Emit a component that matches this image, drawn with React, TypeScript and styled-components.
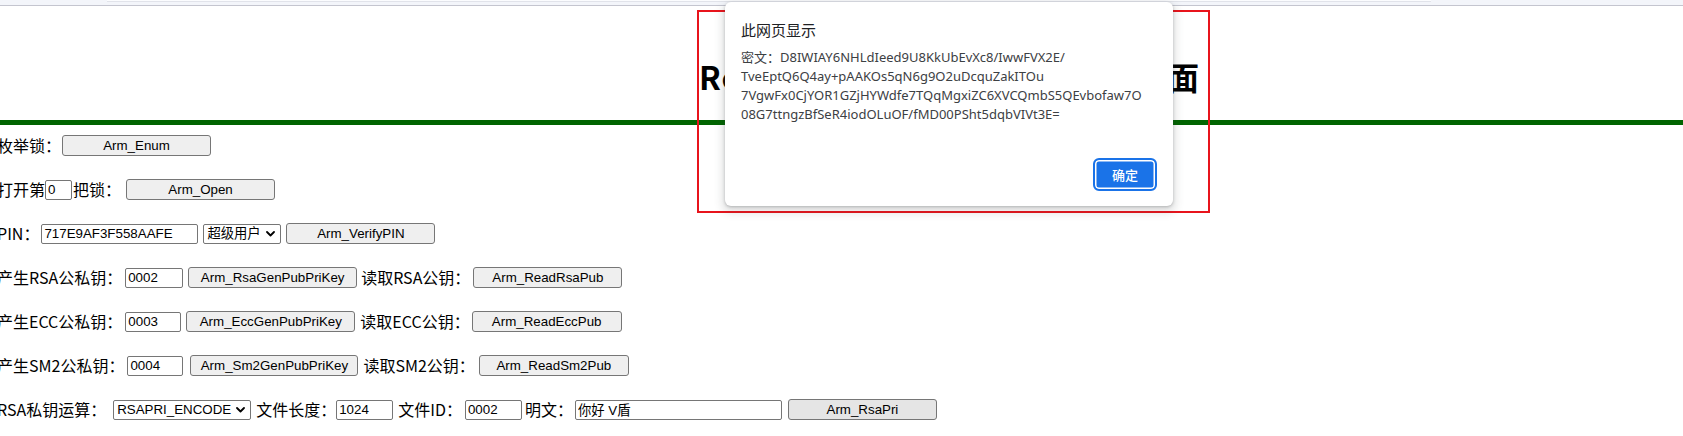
import React from "react";
import styled, { createGlobalStyle } from "styled-components";

const GlobalStyle = createGlobalStyle`
  html, body {
    margin: 0;
    padding: 0;
    background: #ffffff;
  }
  body {
    font-family: "Noto Sans CJK SC", "Noto Sans", sans-serif;
    color: #000;
    overflow: hidden;
  }
`;

const Page = styled.div`
  position: relative;
  width: 1683px;
  height: 436px;
  overflow: hidden;
  background: #fff;
`;

const BrowserStrip = styled.div`
  height: 5px;
  background: #f3f5fa;
  border-bottom: 1px solid #c4c5cf;
  padding-left: 107px;
`;

const StripEdge = styled.div`
  width: 1324px;
  height: 1px;
  background: #fbfcfe;
  border-bottom: 1px solid #e1e3ea;
`;

const Header = styled.header`
  height: 114px;
  box-sizing: border-box;
  padding: 54px 0 0 699px;
`;

const Title = styled.h1`
  margin: 0;
  font-family: "Noto Sans CJK SC", sans-serif;
  font-size: 32px;
  font-weight: 700;
  line-height: 32px;
  letter-spacing: 1px;
  white-space: nowrap;
`;

const Rule = styled.div`
  height: 5px;
  background: #006400;
`;

const Rows = styled.div`
  display: flex;
  flex-direction: column;
  gap: 23px;
  padding-top: 10px;
  margin-left: -3px;
`;

const Row = styled.div`
  display: flex;
  align-items: center;
  height: 21px;
  white-space: nowrap;
`;

const Label = styled.span<{ $ml?: number }>`
  font-family: "Noto Sans CJK SC", sans-serif;
  font-size: 16px;
  line-height: 21px;
  margin-left: ${(p) => p.$ml ?? 0}px;
`;

const Btn = styled.button<{ $w: number; $ml?: number; $hover?: boolean }>`
  box-sizing: border-box;
  width: ${(p) => p.$w}px;
  height: 21px;
  margin: 0 0 0 ${(p) => p.$ml ?? 0}px;
  padding: 0 6px;
  border: 1px solid #767676;
  border-radius: 3px;
  background: ${(p) => (p.$hover ? "#e5e5e5" : "#efefef")};
  font-family: "Liberation Sans", Arial, sans-serif;
  font-size: 13.33px;
  color: #000;
  line-height: 17px;
`;

const Field = styled.input<{ $w: number; $ml?: number }>`
  box-sizing: border-box;
  width: ${(p) => p.$w}px;
  height: 20px;
  margin: 0 0 0 ${(p) => p.$ml ?? 0}px;
  padding: 1px 2px;
  border: 1px solid #767676;
  border-radius: 2px;
  background: #fff;
  font-family: "Liberation Sans", Arial, "Noto Sans CJK SC", sans-serif;
  font-size: 13.33px;
  color: #000;
  outline: none;
`;

const SelectWrap = styled.span<{ $w: number; $ml?: number }>`
  position: relative;
  display: inline-flex;
  width: ${(p) => p.$w}px;
  height: 20px;
  margin-left: ${(p) => p.$ml ?? 0}px;
`;

const NativeSelect = styled.select`
  appearance: none;
  -webkit-appearance: none;
  box-sizing: border-box;
  width: 100%;
  height: 100%;
  margin: 0;
  padding: 0 16px 0 3px;
  border: 1px solid #767676;
  border-radius: 2px;
  background: #fff;
  font-family: "Liberation Sans", Arial, "Noto Sans CJK SC", sans-serif;
  font-size: 13.33px;
  color: #000;
`;

const Chevron = styled.svg`
  position: absolute;
  right: 6px;
  top: 7px;
  pointer-events: none;
`;

const Select = ({ w, ml, value, options }: { w: number; ml?: number; value: string; options: string[] }) => (
  <SelectWrap $w={w} $ml={ml}>
    <NativeSelect defaultValue={value}>
      {options.map((o) => (
        <option key={o}>{o}</option>
      ))}
    </NativeSelect>
    <Chevron width="9" height="6" viewBox="0 0 9 6">
      <path d="M1 1 L4.5 4.5 L8 1" fill="none" stroke="#000" strokeWidth="1.8" strokeLinecap="round" strokeLinejoin="round" />
    </Chevron>
  </SelectWrap>
);

const Marker = styled.div`
  position: absolute;
  left: 697px;
  top: 10px;
  width: 513px;
  height: 203px;
  box-sizing: border-box;
  border: 2px solid #e8141c;
`;

const Dialog = styled.div`
  position: absolute;
  left: 725px;
  top: 2px;
  width: 448px;
  height: 204px;
  box-sizing: border-box;
  padding: 18px 16px 15px 16px;
  background: #fff;
  border-radius: 6px;
  box-shadow: 0 1px 3px rgba(60, 64, 67, 0.3), 0 4px 8px 3px rgba(60, 64, 67, 0.15);
  display: flex;
  flex-direction: column;
`;

const DialogTitle = styled.div`
  font-family: "Noto Sans CJK SC", sans-serif;
  font-size: 15px;
  line-height: 20px;
  color: #202124;
`;

const Message = styled.div`
  margin-top: 8px;
  font-family: "Noto Sans", "Noto Sans CJK SC", sans-serif;
  font-size: 13px;
  line-height: 19px;
  color: #3c4043;
`;

const MsgLine = styled.div`
  white-space: nowrap;
`;

const Footer = styled.div`
  margin-top: auto;
  display: flex;
  justify-content: flex-end;
`;

const OkButton = styled.button`
  box-sizing: border-box;
  width: 64px;
  height: 33px;
  margin: 0;
  padding: 0;
  border: 2px solid #1a73e8;
  border-radius: 6px;
  background: #1a73e8;
  box-shadow: inset 0 0 0 1.5px #ffffff;
  color: #fff;
  font-family: "Noto Sans CJK SC", sans-serif;
  font-size: 13px;
  font-weight: 500;
`;

const messageLines = [
  "密文：D8IWIAY6NHLdIeed9U8KkUbEvXc8/IwwFVX2E/",
  "TveEptQ6Q4ay+pAAKOs5qN6g9O2uDcquZakITOu",
  "7VgwFx0CjYOR1GZjHYWdfe7TQqMgxiZC6XVCQmbS5QEvbofaw7O",
  "08G7ttngzBfSeR4iodOLuOF/fMD00PSht5dqbVIVt3E=",
];

export default function App() {
  return (
    <Page>
      <GlobalStyle />
      <BrowserStrip>
        <StripEdge />
      </BrowserStrip>
      <Header>
        <Title>RemoteArm 加密锁接口测试页面</Title>
      </Header>
      <Rule />
      <Rows>
        <Row>
          <Label>枚举锁：</Label>
          <Btn $w={149} $ml={1}>Arm_Enum</Btn>
        </Row>
        <Row>
          <Label>打开第</Label>
          <Field $w={27} defaultValue="0" />
          <Label $ml={1}>把锁：</Label>
          <Btn $w={149} $ml={5}>Arm_Open</Btn>
        </Row>
        <Row>
          <Label>PIN：</Label>
          <Field $w={157} $ml={2} defaultValue="717E9AF3F558AAFE" />
          <Select w={78} ml={5} value="超级用户" options={["超级用户", "普通用户"]} />
          <Btn $w={149} $ml={5}>Arm_VerifyPIN</Btn>
        </Row>
        <Row>
          <Label>产生RSA公私钥：</Label>
          <Field $w={58} $ml={3} defaultValue="0002" />
          <Btn $w={169} $ml={5}>Arm_RsaGenPubPriKey</Btn>
          <Label $ml={4}>读取RSA公钥：</Label>
          <Btn $w={149} $ml={3}>Arm_ReadRsaPub</Btn>
        </Row>
        <Row>
          <Label>产生ECC公私钥：</Label>
          <Field $w={56} $ml={3} defaultValue="0003" />
          <Btn $w={169} $ml={5}>Arm_EccGenPubPriKey</Btn>
          <Label $ml={5}>读取ECC公钥：</Label>
          <Btn $w={150} $ml={2}>Arm_ReadEccPub</Btn>
        </Row>
        <Row>
          <Label>产生SM2公私钥：</Label>
          <Field $w={56} $ml={3} defaultValue="0004" />
          <Btn $w={168} $ml={7}>Arm_Sm2GenPubPriKey</Btn>
          <Label $ml={5}>读取SM2公钥：</Label>
          <Btn $w={150} $ml={4}>Arm_ReadSm2Pub</Btn>
        </Row>
        <Row>
          <Label>RSA私钥运算：</Label>
          <Select w={138} ml={7} value="RSAPRI_ENCODE" options={["RSAPRI_ENCODE", "RSAPRI_DECODE"]} />
          <Label $ml={5}>文件长度：</Label>
          <Field $w={57} defaultValue="1024" />
          <Label $ml={5}>文件ID：</Label>
          <Field $w={57} $ml={3} defaultValue="0002" />
          <Label $ml={3}>明文：</Label>
          <Field $w={207} $ml={2} defaultValue="你好 V盾" />
          <Btn $w={149} $ml={6} $hover>Arm_RsaPri</Btn>
        </Row>
      </Rows>
      <Marker />
      <Dialog>
        <DialogTitle>此网页显示</DialogTitle>
        <Message>
          {messageLines.map((l) => (
            <MsgLine key={l}>{l}</MsgLine>
          ))}
        </Message>
        <Footer>
          <OkButton>确定</OkButton>
        </Footer>
      </Dialog>
    </Page>
  );
}
